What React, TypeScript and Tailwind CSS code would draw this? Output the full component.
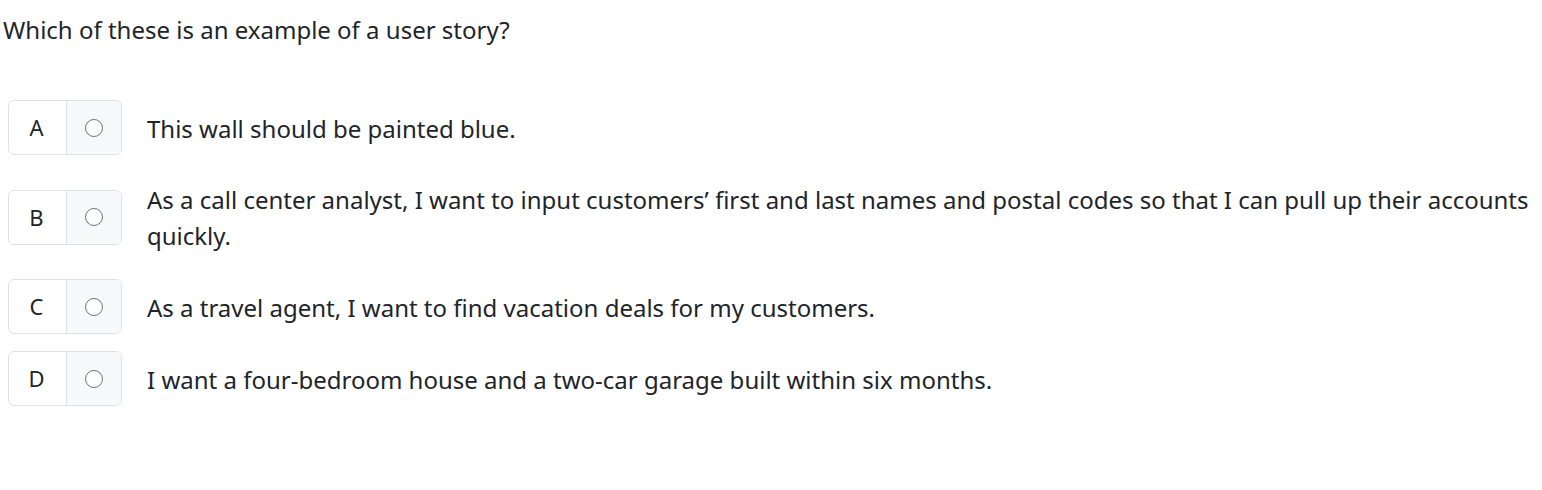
import React from 'react';

const options = [
  { key: 'A', text: 'This wall should be painted blue.', mt: 'mt-[52px]' },
  {
    key: 'B',
    text: 'As a call center analyst, I want to input customers\u2019 first and last names and postal codes so that I can pull up their accounts quickly.',
    mt: 'mt-[25px]',
  },
  { key: 'C', text: 'As a travel agent, I want to find vacation deals for my customers.', mt: 'mt-[25px]' },
  { key: 'D', text: 'I want a four-bedroom house and a two-car garage built within six months.', mt: 'mt-[17px]' },
];

function Option({ k, text, mt }: { k: string; text: string; mt: string }) {
  return (
    <div className={`flex items-center ${mt}`}>
      <div className="flex h-[55px] w-[114px] shrink-0 overflow-hidden rounded-[6px] border border-[#dee2e6]">
        <div className="flex w-[57px] items-center justify-center pr-[2px] text-[22px] text-[#212529]">{k}</div>
        <div className="flex flex-1 items-center justify-center border-l border-[#dee2e6] bg-[#f8f9fa]">
          <span className="block h-[18px] w-[18px] rounded-full border border-[#6c757d] bg-white" />
        </div>
      </div>
      <p className="ml-[25px] pt-[2px] text-[24px] leading-[36px] text-[#212529]">{text}</p>
    </div>
  );
}

export default function App() {
  return (
    <div className="min-h-[490px] bg-white px-[8px] pt-[12px] font-['Noto_Sans',sans-serif]">
      <h2 className="-ml-[5px] text-[24px] leading-[36px] text-[#212529]">Which of these is an example of a user story?</h2>
      {options.map((o) => (
        <Option key={o.key} k={o.key} text={o.text} mt={o.mt} />
      ))}
    </div>
  );
}
